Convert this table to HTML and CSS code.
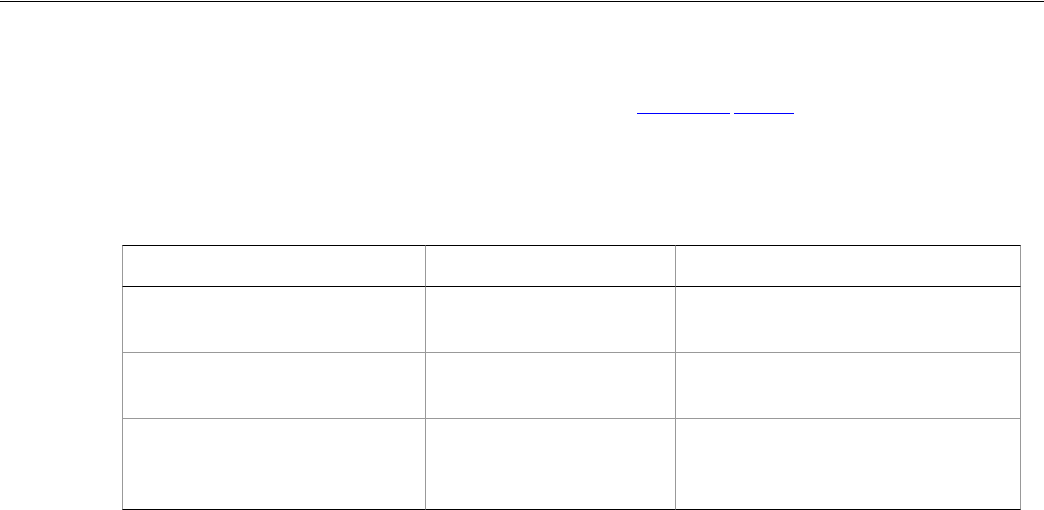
FILE: index.html
```html
<!DOCTYPE html>
<html lang="en">
<head>
<meta charset="utf-8">
<title>Page</title>
<link rel="stylesheet" href="styles.css">
</head>
<body>
<div class="rule"></div>
<div class="links">
  <a class="link link-a" href="#"></a>
  <a class="link link-b" href="#"></a>
</div>
<table class="tbl">
  <thead>
    <tr><th class="c1"></th><th class="c2"></th><th class="c3"></th></tr>
  </thead>
  <tbody>
    <tr class="r1"><td class="c1"></td><td class="c2"></td><td class="c3"></td></tr>
    <tr class="r2"><td class="c1"></td><td class="c2"></td><td class="c3"></td></tr>
    <tr class="r3 last"><td class="c1"></td><td class="c2"></td><td class="c3"></td></tr>
  </tbody>
</table>
</body>
</html>
```
FILE: styles.css
```css
html, body {
  margin: 0;
  padding: 0;
  background: #fff;
  font-family: "Liberation Sans", Arial, sans-serif;
}
.rule {
  margin-top: 1px;
  border-top: 1px solid #000;
}
.links {
  display: flex;
  gap: 4px;
  margin-top: 111px;
  padding-left: 637px;
}
.link {
  display: block;
  height: 0;
  border-bottom: 1px solid #0000ff;
}
.link-a { width: 93px; }
.link-b { width: 60px; }
.tbl {
  margin-top: 131px;
  margin-left: 122px;
  border-collapse: separate;
  border-spacing: 0;
  table-layout: fixed;
  width: 899px;
}
.tbl th, .tbl td {
  padding: 0;
  border-right: 1px solid #999;
  border-bottom: 1px solid #999;
}
.tbl .c1 { width: 302px; border-left: 1px solid #999; }
.tbl .c2 { width: 249px; }
.tbl .c3 { width: 344px; }
.tbl th {
  height: 40px;
  border-top: 1px solid #000;
  border-bottom: 1px solid #000;
}
.tbl .r1 td, .tbl .r2 td { height: 65px; }
.tbl .r3 td { height: 90px; border-bottom: 1px solid #000; }
```
